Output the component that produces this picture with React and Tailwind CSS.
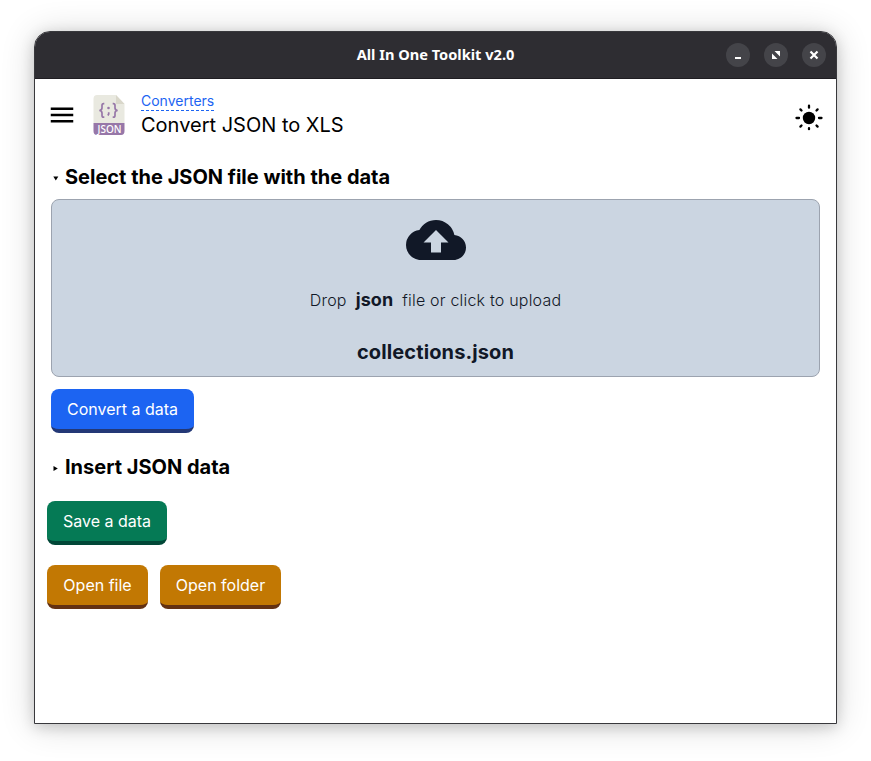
import { MdMenu, MdCloudUpload } from "react-icons/md";

const sans = "font-['Inter','Liberation_Sans',sans-serif]";

function JsonFileIcon() {
  return (
    <svg width="32" height="40" viewBox="0 0 32 40" className="shrink-0">
      <path d="M4 0H23L31.5 9V28H.5V4Q.5 0 4 0Z" fill="#e9e9e0" />
      <path d="M23 0V9H31.5Z" fill="#d9d7ca" />
      <path d="M.5 28H31.5V36Q31.500 40 28 40H4Q.5 40 .5 36Z" fill="#9777a8" />
      <g fill="none" stroke="#9777a8" strokeWidth="1.700">
        <path d="M11.300 8.700H10.600Q9 8.700 9 10.400V13Q9 15.100 6.400 15.500Q9 15.900 9 18V20.400Q9 22.100 10.600 22.100H11.300" />
        <path d="M19.700 8.700H20.400Q22 8.700 22 10.400V13Q22 15.100 24.600 15.500Q22 15.900 22 18V20.400Q22 22.100 20.400 22.100H19.700" />
        <path d="M15.700 17.200V19L14.900 20.500" />
      </g>
      <circle cx="15.500" cy="13" r="1.300" fill="#9777a8" />
      <text x="16.500" y="38" textAnchor="middle" textLength="24" lengthAdjust="spacingAndGlyphs" fontFamily="Noto Sans, sans-serif" fontSize="10.500" fontWeight="500" fill="#fff">JSON</text>
    </svg>
  );
}

function SunIcon() {
  return (
    <svg width="28" height="28" viewBox="0 0 28 28" stroke="#000" strokeWidth="2.300" strokeLinecap="round" className="shrink-0">
      <circle cx="14" cy="14" r="6.200" stroke="none" />
      <path d="M14 1.700V3.700M14 24.200V25.200M1.500 14H4M24 14H26.500M5.400 5.400L6.500 6.500M21.500 21.500L22.600 22.600M5.400 22.600L6.500 21.500M21.500 6.500L22.600 5.400" />
    </svg>
  );
}

function WindowButton({ label, children }) {
  return (
    <button aria-label={label} className="flex size-6 items-center justify-center rounded-full bg-[#444449]">
      <svg width="24" height="24" viewBox="0 0 24 24" fill="none" stroke="#fff" strokeWidth="2">
        {children}
      </svg>
    </button>
  );
}

function Button({ className, children }) {
  return (
    <button className={`h-11 whitespace-nowrap rounded-lg border-b-4 text-base leading-6 text-white ${className}`}>
      {children}
    </button>
  );
}

function Heading({ open, children }) {
  return (
    <h2 className="flex h-7 items-center text-xl font-[650] leading-7 text-black">
      <svg width="14" height="28" viewBox="0 0 14 28" className="shrink-0">
        <path d={open ? "M2.300 13.500H7.300L4.800 17.500Z" : "M2.500 13L6.800 15.500L2.500 18Z"} />
      </svg>
      {children}
    </h2>
  );
}

export default function App() {
  return (
    <div className="h-[761px] w-[871px] bg-white pl-[34px] pt-[31px]">
      <div className={`flex h-[693px] w-[803px] flex-col overflow-hidden rounded-t-[16px] border border-[#38383c] bg-white shadow-[0_3px_14px_rgba(0,0,0,0.17),0_2px_34px_rgba(0,0,0,0.16)] ${sans}`}>
        <header className="flex h-[47px] shrink-0 items-center border-b border-[#1f1d22] bg-[#2e2d32]">
          <div className="w-[120px]" />
          <h1 className="flex-1 pb-0.5 text-center font-['Noto_Sans',sans-serif] text-[14.6px] font-bold leading-5 text-white">
            All In One Toolkit v2.0
          </h1>
          <div className="flex w-[120px] justify-end gap-[14px] pr-[10px]">
            <WindowButton label="Minimize"><path d="M9 15H15" /></WindowButton>
            <WindowButton label="Maximize">
              <path d="M10.500 8H16V13.500ZM8 10.500V16H13.500Z" fill="#fff" stroke="none" />
            </WindowButton>
            <WindowButton label="Close"><path d="M8.500 8.500L15.500 15.500M15.500 8.500L8.500 15.500" strokeWidth="2.200" /></WindowButton>
          </div>
        </header>

        <nav className="flex h-[72px] shrink-0 items-center pl-3 pr-[13px]">
          <MdMenu size={30} className="shrink-0" />
          <div className="ml-4 flex items-center gap-4">
            <JsonFileIcon />
            <div className="flex flex-col items-start">
              <a className="border-b border-dashed border-[#1c64f2] text-sm leading-[18px] text-[#1c64f2]">Converters</a>
              <span className="text-xl leading-7 text-black">Convert JSON to XLS</span>
            </div>
          </div>
          <div className="ml-auto mt-1.5"><SunIcon /></div>
        </nav>

        <main className="flex flex-col items-start px-3 pt-3">
          <section className="flex w-full flex-col items-start px-1">
            <Heading open>Select the JSON file with the data</Heading>
            <div className="mt-2 flex h-[178px] w-[769px] flex-col items-center rounded-lg border border-[#9ca3af] bg-[#cbd5e1] text-[#111827]">
              <MdCloudUpload size={60} className="mt-[10px] shrink-0" />
              <p className="mt-4 flex items-baseline text-base font-light leading-7 tracking-[0.2px]">
                Drop <strong className="mx-[9px] text-lg font-[650] tracking-[0.12px]">json</strong> file or click to upload
              </p>
              <p className="mt-6 text-xl font-[650] leading-7 tracking-[0.12px]">collections.json</p>
            </div>
            <Button className="mt-3 border-[#233876] bg-[#1c64f2] px-4">Convert a data</Button>
            <div className="mt-5"><Heading>Insert JSON data</Heading></div>
          </section>
          <Button className="mt-5 border-[#014737] bg-[#057a55] px-4">Save a data</Button>
          <div className="mt-5 flex gap-3">
            <Button className="w-[101px] border-[#633112] bg-[#c27803]">Open file</Button>
            <Button className="w-[121px] border-[#633112] bg-[#c27803]">Open folder</Button>
          </div>
        </main>
      </div>
    </div>
  );
}
